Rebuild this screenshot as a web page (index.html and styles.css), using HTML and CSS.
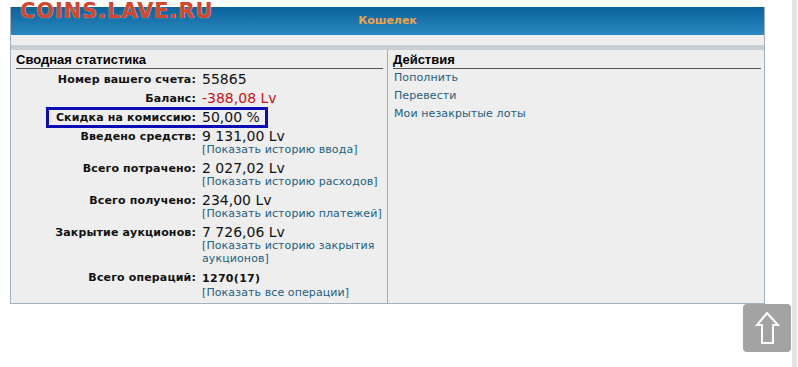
FILE: index.html
```html
<!DOCTYPE html>
<html lang="ru">
<head>
  <meta charset="UTF-8">
  <title>Кошелек</title>
  <link rel="stylesheet" href="styles.css">
</head>
<body>
  <div class="page">
    <div class="main">
      <div class="watermark">COINS.LAVE.RU</div>

      <div class="wallet">
        <div class="wallet-head">Кошелек</div>
        <div class="wallet-strip"></div>

        <div class="wallet-body">
          <div class="col col-stats">
            <h2>Сводная статистика</h2>
            <div class="stat">
              <div class="label">Номер вашего счета:</div>
              <div class="value">55865</div>
            </div>
            <div class="stat">
              <div class="label">Баланс:</div>
              <div class="value negative">-388,08 Lv</div>
            </div>
            <div class="stat marked">
              <div class="label">Скидка на комиссию:</div>
              <div class="value">50,00 %</div>
            </div>
            <div class="stat">
              <div class="label">Введено средств:</div>
              <div class="value">9 131,00 Lv<a href="#">[Показать историю ввода]</a></div>
            </div>
            <div class="stat">
              <div class="label">Всего потрачено:</div>
              <div class="value">2 027,02 Lv<a href="#">[Показать историю расходов]</a></div>
            </div>
            <div class="stat">
              <div class="label">Всего получено:</div>
              <div class="value">234,00 Lv<a href="#">[Показать историю платежей]</a></div>
            </div>
            <div class="stat">
              <div class="label">Закрытие аукционов:</div>
              <div class="value">7 726,06 Lv<a href="#">[Показать историю закрытия аукционов]</a></div>
            </div>
            <div class="stat">
              <div class="label">Всего операций:</div>
              <div class="value"><b>1270(17)</b><a href="#">[Показать все операции]</a></div>
            </div>
          </div>

          <div class="col col-actions">
            <h2>Действия</h2>
            <a href="#">Пополнить</a>
            <a href="#">Перевести</a>
            <a href="#">Мои незакрытые лоты</a>
          </div>
        </div>
      </div>

      <a class="to-top" href="#">
        <svg width="48" height="48" viewBox="0 0 48 48">
          <path d="M24 9 L35 21 L30 21 L30 39 L19 39 L19 21 L14 21 Z" fill="none" stroke="#fff" stroke-width="2" stroke-linejoin="miter"/>
        </svg>
      </a>
    </div>
    <div class="scrollbar"></div>
  </div>
</body>
</html>
```

FILE: styles.css
```css
body {
  margin: 0;
  background-color: #fff;
  font-family: "DejaVu Sans", Verdana, sans-serif;
  font-size: 11px;
  color: #111;
}

.page {
  display: flex;
  min-height: 100vh;
}

.main {
  flex: 1;
  position: relative;
}

.scrollbar {
  width: 5px;
  margin-right: 1px;
  background-color: #e4e4e4;
}

.watermark {
  position: absolute;
  z-index: 1;
  top: 0;
  left: 20px;
  font-size: 21px;
  line-height: 22px;
  font-weight: bold;
  color: #d4452a;
  text-shadow: 0 0 1px #fff;
  letter-spacing: 0.9px;
}

.wallet {
  width: 755px;
  margin: 7px 0 0 10px;
  box-sizing: border-box;
  border: 1px solid #a3b2c1;
  border-top: none;
}

.wallet-head {
  height: 28px;
  line-height: 28px;
  text-align: center;
  font-weight: bold;
  color: #f0a24c;
  background: linear-gradient(#0a629a, #2a89bf);
}

.wallet-strip {
  height: 10px;
  background-color: #eeeeee;
  border-bottom: 5px solid #c7ced4;
}

.wallet-body {
  display: grid;
  grid-template-columns: 376px 1fr;
  background-color: #eeeeee;
}

.col {
  padding: 2px 4px 2px 5px;
}

.col-actions {
  border-left: 1px solid #a9a9a9;
  padding-right: 3px;
}

h2 {
  margin: 0;
  font-family: "Liberation Sans", Arial, sans-serif;
  font-size: 13px;
  line-height: 16px;
  font-weight: bold;
  color: #000;
  border-bottom: 1px solid #555;
}

.stat {
  display: flex;
  align-items: flex-start;
  padding: 3px 0 2px;
  position: relative;
}

.stat .label {
  width: 180px;
  flex: none;
  text-align: right;
  font-weight: bold;
  line-height: 14px;
  padding-top: 1px;
  margin-bottom: -1px;
  letter-spacing: 0.15px;
}

.stat .value {
  flex: 1;
  margin-left: 6px;
  font-size: 14px;
  line-height: 14px;
}

.stat .value b {
  font-size: 11px;
  letter-spacing: 0.3px;
}

.stat .value a,
.col-actions a {
  display: block;
  font-size: 11px;
  line-height: 13px;
  color: #22607f;
  text-decoration: none;
  letter-spacing: 0.1px;
}

.negative {
  color: #cc1111;
}

.stat.marked::after {
  content: "";
  position: absolute;
  left: 30px;
  top: 0;
  width: 222px;
  height: 21px;
  box-sizing: border-box;
  border: 3px solid #0c0cb4;
}

.col-actions a {
  line-height: 14px;
  padding: 2px 1px;
}

.to-top {
  position: fixed;
  right: 7px;
  bottom: 15px;
  width: 48px;
  height: 48px;
  border-radius: 4px;
  background-color: #a3a3a3;
}

.to-top svg {
  display: block;
}
```
